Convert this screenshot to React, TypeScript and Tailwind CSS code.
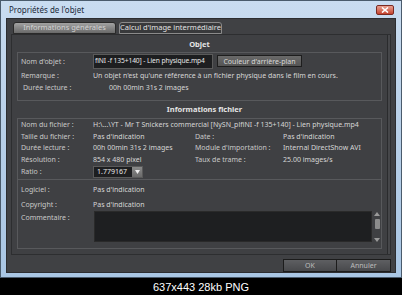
import React from "react";

function Row({ label, value, right }: { label: string; value: React.ReactNode; right?: [string, string] }) {
    return (
        <div className="flex items-center h-[11.5px]">
            <div className="w-[72px] shrink-0 text-[#c9c9c9]">{label}</div>
            <div className="w-[102px] shrink-0 text-[#d6d6d6] whitespace-nowrap">{value}</div>
            {right && (
                <>
                    <div className="w-[88px] shrink-0 text-[#c9c9c9]">{right[0]}</div>
                    <div className="text-[#d6d6d6] whitespace-nowrap">{right[1]}</div>
                </>
            )}
        </div>
    );
}

export default function App() {
    return (
        <div className="w-[402px] h-[295px] bg-black flex flex-col" style={{ fontFamily: "'Noto Sans', 'Open Sans', sans-serif" }}>
            {/* window frame */}
            <div className="h-[278px] border border-[#4a5b6c] bg-gradient-to-b from-[#c9dcf0] via-[#b7cfe8] to-[#a9c6e4] flex flex-col px-[5px] pb-[4px]">
                <div className="h-[18px] flex items-center justify-between">
                    <span className="pl-[3px] pt-[1px] text-[8px] text-[#1b2a3a]">Propriétés de l'objet</span>
                    <div className="mr-[2px] mt-[1px] w-[18px] h-[10px] rounded-[2px] border border-[#7a2a22] bg-gradient-to-b from-[#e8a090] to-[#c4402c] flex items-center justify-center">
                        <svg width="8" height="6" viewBox="0 0 8 6">
                            <path d="M1 0.5 L7 5.5 M7 0.5 L1 5.5" stroke="#fff" strokeWidth="1.6" />
                        </svg>
                    </div>
                </div>

                {/* client */}
                <div className="flex-1 bg-[#404144] border border-[#2c2d30] flex flex-col text-[7px] leading-none">
                    {/* tabs */}
                    <div className="flex gap-[3px] pl-[6px] pt-[3px] h-[15px]">
                        <div className="w-[103px] rounded-t-[3px] border border-[#2a2a2a] bg-gradient-to-b from-[#a2a2a2] to-[#6a6a6a] text-[#d2d2d2] text-[7.5px] flex items-center justify-center">
                            Informations générales
                        </div>
                        <div className="w-[103px] h-[12px] rounded-t-[3px] border border-[#8a8a8a] bg-[#38393b] text-[#e2e2e2] text-[7.5px] flex items-center justify-center">
                            Calcul d'image intermédiaire
                        </div>
                    </div>

                    {/* panel */}
                    <div className="ml-[4px] mr-[4px] h-[221px] border border-[#2d2e30] bg-[#3f4043] flex">
                        <div className="flex-1 flex flex-col px-[5px]">
                            <div className="h-[16px] flex items-center justify-center font-bold text-[#e4e4e4] text-[7.5px] pt-[3px]">Objet</div>
                            <div className="mt-[1px] border border-[#58595c] h-[49px] pl-[3px] flex flex-col">
                                <div className="flex items-center h-[16px]">
                                    <div className="w-[72px] shrink-0 text-[#c9c9c9]">Nom d'objet :</div>
                                    <div className="w-[120px] h-[15px] bg-[#1d1e20] border border-[#5a5a5a] text-[#e8e8e8] text-[6.7px] tracking-[-0.1px] flex items-center pl-[1px] whitespace-nowrap">
                                        fiNI -f 135+140] - Lien physique.mp4
                                    </div>
                                    <div className="ml-[4px] w-[85px] h-[12px] border border-[#1e1e1e] bg-gradient-to-b from-[#6a6a6a] to-[#545454] text-[#d8d8d8] flex items-center justify-center whitespace-nowrap">
                                        Couleur d'arrière-plan
                                    </div>
                                </div>
                                <div className="flex items-center h-[13px] whitespace-nowrap">
                                    <div className="w-[72px] shrink-0 text-[#c9c9c9]">Remarque :</div>
                                    <div className="text-[#d6d6d6]">Un objet n'est qu'une référence à un fichier physique dans le film en cours.</div>
                                </div>
                                <div className="flex items-center h-[11px]">
                                    <div className="w-[88px] shrink-0 pl-[2px] text-[#c9c9c9]">Durée lecture :</div>
                                    <div className="text-[#d6d6d6]">00h 00min 31s 2 images</div>
                                </div>
                            </div>

                            <div className="h-[17px] flex items-center justify-center font-bold text-[#e4e4e4] text-[7.5px] pl-[10px]">Informations fichier</div>
                            <div className="border border-[#58595c] h-[62px] pl-[3px] pt-[0px] flex flex-col">
                                <Row label="Nom du fichier :" value="H:\...\YT - Mr T Snickers commercial [NySN_plfiNI -f 135+140] - Lien physique.mp4" />
                                <Row label="Taille du fichier :" value="Pas d'indication" right={["Date :", "Pas d'indication"]} />
                                <Row label="Durée lecture :" value="00h 00min 31s 2 images" right={["Module d'importation :", "Internal DirectShow AVI"]} />
                                <Row label="Résolution :" value="854 x 480 pixel" right={["Taux de trame :", "25.00 images/s"]} />
                                <div className="flex items-center h-[13px]">
                                    <div className="w-[72px] shrink-0 text-[#c9c9c9]">Ratio :</div>
                                    <div className="flex h-[12px] border border-[#5a5a5a]">
                                        <div className="w-[38px] bg-[#1d1e20] text-[#e8e8e8] flex items-center pl-[3px]">1.779167</div>
                                        <div className="w-[10px] bg-gradient-to-b from-[#8a8a8a] to-[#6a6a6a] flex items-center justify-center">
                                            <svg width="5" height="4" viewBox="0 0 5 4"><path d="M0 0 H5 L2.5 4 Z" fill="#eee" /></svg>
                                        </div>
                                    </div>
                                </div>
                            </div>

                            <div className="border border-[#58595c] border-t-0 h-[69px] pl-[3px] flex flex-col">
                                <div className="flex items-center h-[18px] pt-[1px]">
                                    <div className="w-[72px] shrink-0 text-[#c9c9c9]">Logiciel :</div>
                                    <div className="text-[#d6d6d6]">Pas d'indication</div>
                                </div>
                                <div className="flex items-center h-[13px]">
                                    <div className="w-[72px] shrink-0 text-[#c9c9c9]">Copyright :</div>
                                    <div className="text-[#d6d6d6]">Pas d'indication</div>
                                </div>
                                <div className="flex h-[32px]">
                                    <div className="w-[73px] shrink-0 text-[#c9c9c9] pt-[3px]">Commentaire :</div>
                                    <div className="w-[278px] h-[31px] bg-[#1e1f21] border border-[#2a2a2a]" />
                                    <div className="w-[8px] ml-[1px] flex flex-col items-center justify-between py-[1px]">
                                        <svg width="6" height="4" viewBox="0 0 6 4"><path d="M0 4 L3 0 L6 4 Z" fill="#9a9a9a" /></svg>
                                        <div className="w-[5px] h-[10px] bg-[#8c8c8c] rounded-[1px] -mt-[6px]" />
                                        <svg width="6" height="4" viewBox="0 0 6 4"><path d="M0 0 H6 L3 4 Z" fill="#9a9a9a" /></svg>
                                    </div>
                                </div>
                            </div>
                        </div>
                        <div className="w-[4px] border-l border-[#2a2b2d] bg-[#46474a]" />
                    </div>

                    {/* buttons */}
                    <div className="flex justify-end pr-[4px] pt-[4px]">
                        <div className="w-[54px] h-[13px] border border-[#1c1c1c] bg-gradient-to-b from-[#5e5f62] to-[#48494c] text-[#bdbdbd] flex items-center justify-center">OK</div>
                        <div className="w-[54px] h-[13px] border border-[#1c1c1c] border-l-0 bg-gradient-to-b from-[#5e5f62] to-[#48494c] text-[#bdbdbd] flex items-center justify-center">Annuler</div>
                    </div>
                </div>
            </div>

            {/* caption */}
            <div className="flex-1 flex items-center justify-center text-white text-[11px] pt-[1px]" style={{ fontFamily: "'Liberation Sans', Arial, sans-serif" }}>
                637x443 28kb PNG
            </div>
        </div>
    );
}
